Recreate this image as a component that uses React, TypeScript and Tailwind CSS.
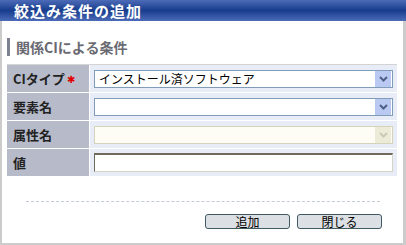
const font = { fontFamily: '"MS PGothic", "Noto Sans CJK JP", sans-serif' };

function DropButton({ disabled }: { disabled?: boolean }) {
  return (
    <div
      className={`w-[16px] h-[16px] flex items-center justify-center ${
        disabled ? 'bg-[#ecebd8]' : 'bg-[#b9c9f2]'
      }`}
    >
      <svg width="9" height="6" viewBox="0 0 9 6">
        <path
          d="M1 1 L4.5 4.5 L8 1"
          fill="none"
          stroke={disabled ? '#c9c9b8' : '#4d6185'}
          strokeWidth="2"
        />
      </svg>
    </div>
  );
}

function Select({ value, disabled }: { value?: string; disabled?: boolean }) {
  return (
    <div
      className={`h-[18px] flex items-center justify-between border pl-[4px] pr-px ${
        disabled ? 'border-[#d6d3bb] bg-[#fdfdf6]' : 'border-[#7f9db9] bg-white'
      }`}
    >
      <span className="text-[12px] leading-none text-black">{value}</span>
      <DropButton disabled={disabled} />
    </div>
  );
}

const rows = [
  { label: 'CIタイプ', required: true, field: <Select value="インストール済ソフトウェア" /> },
  { label: '要素名', field: <Select /> },
  { label: '属性名', field: <Select disabled /> },
  {
    label: '値',
    field: (
      <div className="h-[19px] border-t-2 border-l border-[#6f6a5b] border-r border-b border-r-[#d6d3c8] border-b-[#d6d3c8] bg-white" />
    )
  }
];

export default function App() {
  return (
    <div className="w-[406px] h-[245px] flex flex-col bg-white" style={font}>
      <div className="h-[21px] shrink-0 flex items-center pl-[14px] bg-gradient-to-b from-[#4c6bb8] via-[#173d8c] to-[#4c6bb8]">
        <span className="text-white text-[15px] font-bold leading-none tracking-[1px]">
          絞込み条件の追加
        </span>
      </div>

      <div className="flex-1 flex flex-col border-l-2 border-r-[3px] border-b-2 border-[#cccccc] pl-[5px] pr-[6px]">
        <div className="mt-[17px] h-[18px] flex items-center gap-[6px]">
          <div className="w-[3px] h-[18px] bg-[#7d8292]" />
          <span className="text-[14px] font-bold text-[#6a6a72] leading-none">関係CIによる条件</span>
        </div>

        <div className="mt-[8px] border-t border-[#d4d4d4] flex flex-col gap-px w-[390px]">
          {rows.map((row, i) => (
            <div key={i} className="flex gap-px h-[27px]">
              <div className="w-[82px] flex items-center pl-[6px] bg-[#b7bac9]">
                <span className="text-[13px] font-bold text-[#222222] leading-none">{row.label}</span>
                {row.required && <span className="text-[#e00000] text-[10px] ml-[2px] leading-none">✱</span>}
              </div>
              <div className="flex-1 flex flex-col justify-center pl-[4px] pr-[4px] bg-[#e8ecf6]">
                {row.field}
              </div>
            </div>
          ))}
        </div>

        <div className="mt-[25px] ml-[19px] w-[354px] border-t border-dashed border-[#c3cad4]" />

        <div className="mt-[12px] flex justify-end gap-[7px] pr-[15px]">
          {['追加', '閉じる'].map((label) => (
            <button
              key={label}
              className="w-[85px] shrink-0 h-[15px] rounded-[3px] border border-[#3f5a63] bg-[#dcdfe3] text-[12px] leading-none text-black flex items-center justify-center"
              style={font}
            >
              {label}
            </button>
          ))}
        </div>
      </div>
    </div>
  );
}
